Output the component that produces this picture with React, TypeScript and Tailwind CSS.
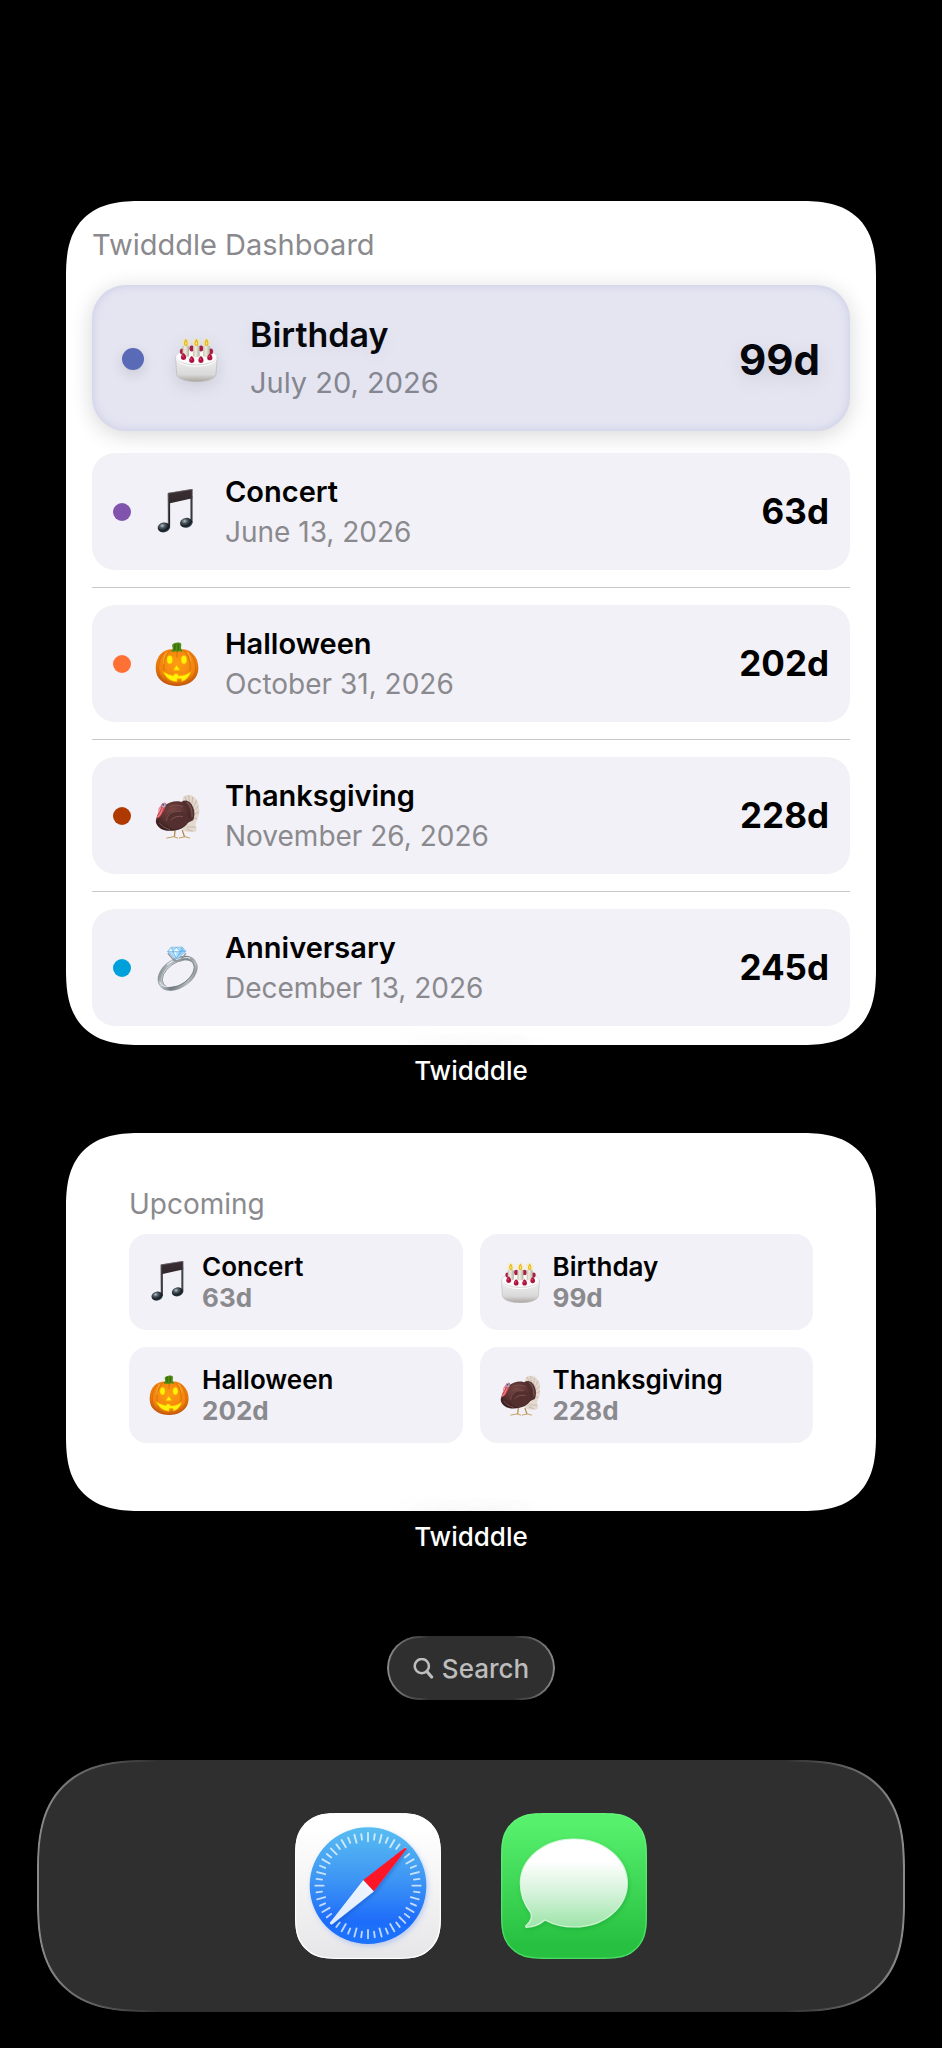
import React from "react";

type Kind = "cake" | "notes" | "pumpkin" | "turkey" | "ring";

interface EventItem {
  name: string;
  date: string;
  days: string;
  kind: Kind;
  dot: string;
}

const birthday: EventItem = { name: "Birthday", date: "July 20, 2026", days: "99d", kind: "cake", dot: "bg-[#596ab6]" };
const concert: EventItem = { name: "Concert", date: "June 13, 2026", days: "63d", kind: "notes", dot: "bg-[#8054ac]" };
const halloween: EventItem = { name: "Halloween", date: "October 31, 2026", days: "202d", kind: "pumpkin", dot: "bg-[#ff7034]" };
const thanksgiving: EventItem = { name: "Thanksgiving", date: "November 26, 2026", days: "228d", kind: "turkey", dot: "bg-[#ae3a00]" };
const anniversary: EventItem = { name: "Anniversary", date: "December 13, 2026", days: "245d", kind: "ring", dot: "bg-[#00a0da]" };

const rows = [concert, halloween, thanksgiving, anniversary];
const tiles = [concert, birthday, halloween, thanksgiving];

function Cake({ id }: { id: string }) {
  return (
    <>
      <defs>
        <linearGradient id={`${id}a`} x1="0" y1="0" x2="0" y2="1">
          <stop offset="0" stopColor="#f1f0f0" />
          <stop offset="0.7" stopColor="#dad9da" />
          <stop offset="1" stopColor="#aaa59e" />
        </linearGradient>
        <linearGradient id={`${id}b`} x1="0" y1="0" x2="1" y2="0">
          <stop offset="0" stopColor="#c4bfac" />
          <stop offset="0.4" stopColor="#f0ede0" />
          <stop offset="1" stopColor="#b3ae9c" />
        </linearGradient>
      </defs>
      <path d="M6 66 L9 116 C12 131 38 139 69 139 C100 139 126 131 129 116 L132 66Z" fill={`url(#${id}a)`} stroke="#b9b6b6" strokeWidth="2" />
      <ellipse cx="69" cy="64" rx="63" ry="24" fill="#fbfbfb" stroke="#cdcbcd" strokeWidth="2" />
      <path d="M8 70 C14 84 40 92 69 92 C98 92 124 84 130 70" fill="none" stroke="#fff" strokeWidth="3" />
      {[[26, 47], [55, 38], [83, 38], [113, 47]].map(([x, y]) => (
        <ellipse key={x} cx={x} cy={y} rx="7" ry="9" fill="#a81f45" />
      ))}
      {[37, 69, 100].map((x) => (
        <g key={x}>
          <circle cx={x} cy="20" r="13" fill="#ffe873" opacity="0.3" />
          <path d={`M${x - 10} 31 q10 -5 20 0 V62 q-10 6 -20 0Z`} fill={`url(#${id}b)`} />
          <path d={`M${x} 8 C${x + 8} 19 ${x + 7} 29 ${x} 30 C${x - 7} 29 ${x - 8} 19 ${x} 8Z`} fill="#e2b21a" />
          <path d={`M${x} 15 C${x + 4} 21 ${x + 3} 26 ${x} 27 C${x - 3} 26 ${x - 4} 21 ${x} 15Z`} fill="#fbe96a" />
        </g>
      ))}
      {[[30, 63], [55, 72], [83, 72], [110, 64]].map(([x, y]) => (
        <g key={x}>
          <path d={`M${x} ${y - 11} C${x + 8} ${y - 6} ${x + 10} ${y + 4} ${x + 6} ${y + 8} Q${x} ${y + 12} ${x - 6} ${y + 8} C${x - 10} ${y + 4} ${x - 8} ${y - 6} ${x} ${y - 11}Z`} fill="#b1123f" />
          <ellipse cx={x - 2} cy={y - 2} rx="2" ry="3" fill="#d9547a" />
        </g>
      ))}
    </>
  );
}

function Notes({ id }: { id: string }) {
  return (
    <>
      <defs>
        <radialGradient id={`${id}a`} cx="0.4" cy="0.3" r="0.75">
          <stop offset="0" stopColor="#b4c3cc" />
          <stop offset="0.3" stopColor="#4b5860" />
          <stop offset="0.7" stopColor="#141a1f" />
          <stop offset="1" stopColor="#43606c" />
        </radialGradient>
        <linearGradient id={`${id}b`} x1="0" y1="0" x2="0" y2="1">
          <stop offset="0" stopColor="#3a2e31" />
          <stop offset="1" stopColor="#221d22" />
        </linearGradient>
      </defs>
      <path d="M40 12 L115 0 V28 L47 43 V117 H41Z" fill={`url(#${id}b)`} />
      <path d="M109 22 H115 V104 H109Z" fill="#2c3035" />
      <path d="M41 14 V116 M114.500 2 V103" stroke="#76818a" strokeWidth="2" />
      <path d="M41 13 L114 1" stroke="#79747c" strokeWidth="2" />
      <ellipse cx="28" cy="117" rx="19" ry="15" fill={`url(#${id}a)`} transform="rotate(-10 28 117)" />
      <ellipse cx="96" cy="103" rx="19" ry="15" fill={`url(#${id}a)`} transform="rotate(-10 96 103)" />
    </>
  );
}

function Pumpkin({ id }: { id: string }) {
  return (
    <>
      <defs>
        <radialGradient id={`${id}a`} cx="0.5" cy="0.4" r="0.62">
          <stop offset="0" stopColor="#ff9d12" />
          <stop offset="0.7" stopColor="#f2830e" />
          <stop offset="1" stopColor="#b84a08" />
        </radialGradient>
      </defs>
      <path d="M67 29 C82 22 102 24 115 38 C131 52 136 76 131 97 C125 122 98 137 68 137 C38 137 10 122 5 97 C0 75 6 50 21 37 C34 25 54 22 67 29Z" fill={`url(#${id}a)`} />
      <path d="M49 28 C24 45 20 98 42 132 M87 28 C112 45 116 98 94 132 M28 36 C8 58 6 96 24 120 M108 36 C128 58 130 96 112 120 M68 32 V50" fill="none" stroke="#c9640a" strokeWidth="3" opacity="0.7" />
      <path d="M38 34 C28 46 26 58 28 70 M98 34 C108 44 110 52 110 62" fill="none" stroke="#ffb84a" strokeWidth="4" opacity="0.55" />
      <path d="M53 13 C56 4 77 2 81 9 L80 23 C84 27 86 31 82 33 C76 28 71 34 67 33 C62 31 58 34 50 32 C51 28 55 26 55 22Z" fill="#4f8a14" />
      <path d="M62 10 L61 28 M71 9 L72 28" stroke="#2f6109" strokeWidth="3" />
      <g fill="#fff208" stroke="#f7a800" strokeWidth="2">
        <ellipse cx="46" cy="57" rx="9" ry="13" />
        <ellipse cx="89" cy="57" rx="9" ry="13" />
        <path d="M67 73 L77 88 Q67 91 57 88Z" />
        <path d="M25 91 C37 101 50 104 58 105 L59 100 L71 100 L72 106 C86 106 99 102 110 93 C106 110 95 120 82 123 L81 115 L69 115 L68 124 C48 123 32 111 25 91Z" />
      </g>
    </>
  );
}

function Turkey({ id }: { id: string }) {
  return (
    <>
      <defs>
        <radialGradient id={`${id}a`} cx="0.5" cy="0.35" r="0.7">
          <stop offset="0" stopColor="#7c4a46" />
          <stop offset="0.55" stopColor="#573030" />
          <stop offset="1" stopColor="#311b1c" />
        </radialGradient>
      </defs>
      <path d="M62 113 L60 134 M84 113 L91 134" stroke="#b58a4d" strokeWidth="4" />
      <path d="M37 137 L58 133 L70 137 M75 137 L92 133 L106 137" fill="none" stroke="#c29a5c" strokeWidth="3" strokeLinecap="round" />
      <path d="M86 12 C92 8 97 5 104 6 C112 5 120 11 125 17 C133 25 134 35 135 45 C138 58 133 72 129 81 L124 96 L128 113 C122 122 112 116 106 119 C97 118 88 116 80 109Z" fill="#e3d9ce" />
      <path d="M92 10 L103 38 M103 7 L108 40 M116 12 L112 42 M127 23 L116 48 M133 39 L118 56 M134 58 L118 66 M129 78 L112 75 M97 103 L126 104 M96 109 L116 117" stroke="#b9a698" strokeWidth="2" />
      <path d="M82 27 C91 20 103 22 112 34 C121 48 124 65 117 83 L91 95Z" fill="#51302f" />
      <path d="M98 28 C109 37 115 51 114 72" fill="none" stroke="#7a5451" strokeWidth="4" />
      <path d="M5 78 C11 60 23 38 47 29 C70 20 94 26 103 47 C113 69 107 95 83 107 C61 118 28 119 13 104 C5 96 1 88 5 78Z" fill={`url(#${id}a)`} />
      <path d="M35 79 C39 60 58 49 79 55 C94 60 101 68 105 78 C98 99 81 109 59 111 C42 106 33 94 35 79Z" fill="#53302f" />
      <path d="M36 85 C38 65 55 52 80 56 M14 91 C23 101 31 108 47 111 M49 83 C58 72 73 69 86 72 M44 42 C58 36 73 35 86 43" fill="none" stroke="#805350" strokeWidth="3" />
      <path d="M34 31 C25 26 19 34 19 42 C19 51 8 64 6 75 C10 80 19 73 24 61 C29 53 35 43 34 31Z" fill="#c8424b" />
      <path d="M24 31 Q34 28 33 40 L27 46 Q20 43 21 36Z" fill="#a8b5d5" />
      <circle cx="26" cy="36" r="3" fill="#6a3f67" />
      <path d="M20 39 L14 47 L13 58 M24 48 L17 64 L10 72" fill="none" stroke="#ec8287" strokeWidth="4" strokeLinecap="round" />
    </>
  );
}

function Ring({ id }: { id: string }) {
  return (
    <>
      <defs>
        <linearGradient id={`${id}a`} x1="0" y1="0" x2="1" y2="1">
          <stop offset="0" stopColor="#5d656b" />
          <stop offset="0.25" stopColor="#bcc5ca" />
          <stop offset="0.5" stopColor="#727b81" />
          <stop offset="0.8" stopColor="#b4bcc1" />
          <stop offset="1" stopColor="#5c646a" />
        </linearGradient>
      </defs>
      <ellipse cx="70" cy="86" rx="61" ry="39" transform="rotate(-35 70 86)" fill="none" stroke={`url(#${id}a)`} strokeWidth="12" />
      <ellipse cx="72" cy="87" rx="55" ry="33" transform="rotate(-35 72 87)" fill="none" stroke="#6a7278" strokeWidth="2" />
      <path d="M15 112 C20 126 38 131 59 122 M38 60 C55 46 87 34 109 40" fill="none" stroke="#eef2f4" strokeWidth="3" />
      <path d="M40 25 L60 48 L79 48 L95 25 M57 41 L69 50 L82 41" fill="none" stroke="#8f999f" strokeWidth="4" />
      <path d="M39 20 L50 7 L84 6 L95 19 L70 42 L62 42Z" fill="#a9dcfb" stroke="#82b7de" strokeWidth="2" />
      <path d="M50 7 L57 21 L66 7 L78 21 L84 6 M39 20 H95 M57 21 L66 41 L78 21" fill="none" stroke="#5c9fda" strokeWidth="2" />
      <path d="M57 19 L66 8 L76 19Z M58 23 L66 37 L66 23Z M43 19 L50 10 L55 19Z" fill="#e7f8ff" />
      <path d="M80 19 L84 10 L91 19Z M70 35 L76 23 L85 23Z" fill="#72bdf4" />
    </>
  );
}

const art = { cake: Cake, notes: Notes, pumpkin: Pumpkin, turkey: Turkey, ring: Ring };

function Pictogram({ kind, small = false }: { kind: Kind; small?: boolean }) {
  const Art = art[kind];
  const id = React.useId();
  return (
    <svg viewBox="2 0 138 140" aria-hidden="true" className={small ? "block size-[42px] max-w-none" : "size-[46px] shrink-0"}>
      <Art id={id} />
    </svg>
  );
}

function FeaturedEvent({ item }: { item: EventItem }) {
  return (
    <article className="flex items-center gap-[30px] rounded-[34px] bg-[#e4e5f1] px-[30px] pt-[26px] pb-6 shadow-[0_4px_22px_rgba(0,0,0,0.16),inset_0_0_10px_#c6cae6]">
      <span className={`size-[22px] shrink-0 rounded-full shadow-[0_5px_14px_rgba(0,0,0,0.12)] ${item.dot}`} />
      <span className="drop-shadow-[0_5px_8px_rgba(0,0,0,0.1)]">
        <Pictogram kind={item.kind} />
      </span>
      <div className="min-w-0 flex-1 leading-[48px]">
        <h2 className="text-[34px] font-semibold text-[#07080c] [text-shadow:0_5px_18px_rgba(0,0,0,0.06)]">{item.name}</h2>
        <p className="text-[29px] text-[#85868f]">{item.date}</p>
      </div>
      <span className="text-[42px] font-bold text-[#05070d] [text-shadow:0_6px_20px_rgba(0,0,0,0.1)]">{item.days}</span>
    </article>
  );
}

function EventRow({ item }: { item: EventItem }) {
  return (
    <article className="flex min-h-[117px] items-center gap-6 rounded-[23px] bg-[#f2f1f7] px-[21px]">
      <span className={`size-[18px] shrink-0 rounded-full ${item.dot}`} />
      <Pictogram kind={item.kind} />
      <div className="min-w-0 flex-1 leading-[40px]">
        <h2 className="text-[29px] font-semibold text-black">{item.name}</h2>
        <p className="text-[28px] text-[#8a8a8e]">{item.date}</p>
      </div>
      <span className="text-[35px] font-bold text-black">{item.days}</span>
    </article>
  );
}

function EventTile({ item }: { item: EventItem }) {
  return (
    <article className="flex items-center gap-[13px] rounded-[18px] bg-[#f2f1f7] px-5 py-[17px]">
      <span className="w-10 shrink-0 overflow-hidden">
        <Pictogram kind={item.kind} small />
      </span>
      <div className="min-w-0 text-[26px] leading-[31px]">
        <h2 className="font-semibold text-black">{item.name}</h2>
        <p className="font-bold text-[#8a8a8e]">{item.days}</p>
      </div>
    </article>
  );
}

function AppLabel() {
  return (
    <p className="relative mt-[10px] text-center text-[26px] leading-[32px] font-medium text-white [text-shadow:0_0_30px_rgba(0,0,0,0.5)]">
      Twidddle
    </p>
  );
}

const squircle =
  "M0 159 C0 113 0 90 8 66 C18 39 39 18 66 8 C90 0 113 0 159 0 H279 C325 0 348 0 372 8 C399 18 420 39 430 66 C438 90 438 113 438 159 V279 C438 325 438 348 430 372 C420 399 399 420 372 430 C348 438 325 438 279 438 H159 C113 438 90 438 66 430 C39 420 18 399 8 372 C0 348 0 325 0 279Z";

function SafariIcon() {
  return (
    <svg viewBox="0 0 438 438" className="size-[146px]" aria-hidden="true">
      <defs>
        <linearGradient id="safariTile" x1="0" y1="0" x2="0" y2="1">
          <stop offset="0.1" stopColor="#ffffff" />
          <stop offset="1" stopColor="#e6e6e8" />
        </linearGradient>
        <linearGradient id="safariDial" x1="0" y1="0" x2="0" y2="1">
          <stop offset="0" stopColor="#59bdf1" />
          <stop offset="0.45" stopColor="#3d95f4" />
          <stop offset="0.8" stopColor="#1f6dfa" />
          <stop offset="1" stopColor="#1e73fb" />
        </linearGradient>
        <linearGradient id="safariSouth" x1="1" y1="0" x2="0" y2="1">
          <stop offset="0" stopColor="#f1f6ff" />
          <stop offset="1" stopColor="#dcebff" />
        </linearGradient>
        <filter id="safariGlow" x="-20%" y="-20%" width="140%" height="140%">
          <feDropShadow dx="5" dy="7" stdDeviation="8" floodColor="#3a78f0" floodOpacity="0.28" />
        </filter>
        <filter id="needleShade" x="-20%" y="-20%" width="140%" height="140%">
          <feDropShadow dx="5" dy="6" stdDeviation="5" floodColor="#0b3fa8" floodOpacity="0.3" />
        </filter>
        <clipPath id="safariClip">
          <path d={squircle} />
        </clipPath>
      </defs>
      <path d={squircle} fill="url(#safariTile)" />
      <path d={squircle} fill="none" stroke="#ffffff" strokeWidth="7" clipPath="url(#safariClip)" />
      <circle cx="219" cy="218" r="175" fill="url(#safariDial)" filter="url(#safariGlow)" />
      <g stroke="#ffffff" strokeOpacity="0.72" strokeWidth="5.5" strokeLinecap="round">
        {Array.from({ length: 48 }, (_, i) => (
          <line key={i} x1="219" x2="219" y1={i % 2 ? 62 : 60} y2={i % 2 ? 79 : 85} transform={`rotate(${i * 7.5} 219 218)`} />
        ))}
      </g>
      <g filter="url(#needleShade)">
        <path d="M205 201 L237 235 L112 334 Q104 337 106 328Z" fill="url(#safariSouth)" />
        <path d="M205 201 L237 235 L334 109 Q335 103 328 106Z" fill="#fd1526" />
      </g>
    </svg>
  );
}

function MessagesIcon() {
  const bubble =
    "M219 78 C308 78 379 137 379 210 C379 284 308 342 219 342 C186 342 156 334 132 321 C117 334 97 342 76 343 C73 342 73 339 75 338 C89 327 94 313 89 299 C69 274 58 244 58 210 C58 137 130 78 219 78Z";
  return (
    <svg viewBox="0 0 438 438" className="size-[146px]" aria-hidden="true">
      <defs>
        <linearGradient id="messagesTile" x1="0" y1="0" x2="0" y2="1">
          <stop offset="0.08" stopColor="#57f06d" />
          <stop offset="0.9" stopColor="#27c040" />
        </linearGradient>
        <linearGradient id="messagesBubble" x1="0" y1="0" x2="0" y2="1">
          <stop offset="0.25" stopColor="#ffffff" />
          <stop offset="0.62" stopColor="#d4f2d9" />
          <stop offset="1" stopColor="#9ce4a8" />
        </linearGradient>
        <filter id="messagesShade" x="-20%" y="-20%" width="140%" height="140%">
          <feDropShadow dx="3" dy="5" stdDeviation="7" floodColor="#0b8a28" floodOpacity="0.35" />
        </filter>
        <clipPath id="messagesClip">
          <path d={squircle} />
        </clipPath>
      </defs>
      <path d={squircle} fill="url(#messagesTile)" />
      <path d={squircle} fill="none" stroke="#6cf886" strokeOpacity="0.5" strokeWidth="8" clipPath="url(#messagesClip)" />
      <path d={bubble} fill="url(#messagesBubble)" stroke="#dcfbe1" strokeOpacity="0.85" strokeWidth="3.5" filter="url(#messagesShade)" />
    </svg>
  );
}

export default function App() {
  return (
    <main className="min-h-screen bg-black pt-[201px] pb-9 font-[Inter,sans-serif]">
      <div className="px-[66px]">
        <section
          aria-label="Twidddle Dashboard"
          className="rounded-[62px] bg-white px-[26px] pt-6 pb-[19px] supports-[corner-shape:squircle]:rounded-[76px] supports-[corner-shape:squircle]:[corner-shape:superellipse(1.4)]"
        >
          <h1 className="mb-5 text-[29px] leading-[40px] text-[#8a8a8e]">Twidddle Dashboard</h1>
          <FeaturedEvent item={birthday} />
          <ul className="mt-[22px]">
            {rows.map((item, i) => (
              <li key={item.name} className={i > 0 ? "mt-[17px] border-t border-[#c8c8ca] pt-[17px]" : ""}>
                <EventRow item={item} />
              </li>
            ))}
          </ul>
        </section>
        <AppLabel />

        <section
          aria-label="Upcoming"
          className="mt-[46px] rounded-[62px] bg-white px-[63px] pt-[53px] pb-[68px] supports-[corner-shape:squircle]:rounded-[76px] supports-[corner-shape:squircle]:[corner-shape:superellipse(1.4)]"
        >
          <h1 className="mb-3 text-[28px] leading-[36px] text-[#8a8a8e]">Upcoming</h1>
          <div className="grid grid-cols-2 gap-[17px]">
            {tiles.map((item) => (
              <EventTile key={item.name} item={item} />
            ))}
          </div>
        </section>
        <AppLabel />
      </div>

      <div className="mt-[83px] flex justify-center">
        <button
          type="button"
          className="relative flex h-16 items-center gap-2 rounded-full bg-[#2f2f2f] px-[26px] text-[26px] font-medium text-[#bdbdbd] after:absolute after:inset-0 after:rounded-full after:border-2 after:border-[#8c8c8c] after:[mask-image:linear-gradient(to_right,black,transparent_25%,transparent_75%,black)]"
        >
          <svg viewBox="0 0 60 62" className="size-[21px]" fill="none" stroke="currentColor" aria-hidden="true">
            <circle cx="25" cy="24" r="21" strokeWidth="7.5" />
            <path d="M40 40 L54 56" strokeWidth="9.5" strokeLinecap="round" />
          </svg>
          Search
        </button>
      </div>

      <nav
        aria-label="Dock"
        className="relative mx-[37px] mt-[60px] flex justify-center gap-[60px] rounded-[88px] bg-[#2f2f2f] py-[53px] after:pointer-events-none after:absolute after:inset-0 after:rounded-[88px] after:border-2 after:border-[#8c8c8c] after:[mask-image:linear-gradient(to_right,black,transparent_14%,transparent_86%,black)] supports-[corner-shape:squircle]:rounded-[110px] supports-[corner-shape:squircle]:[corner-shape:superellipse(1.4)] supports-[corner-shape:squircle]:after:rounded-[110px] supports-[corner-shape:squircle]:after:[corner-shape:superellipse(1.4)]"
      >
        <a href="#safari" aria-label="Safari">
          <SafariIcon />
        </a>
        <a href="#messages" aria-label="Messages">
          <MessagesIcon />
        </a>
      </nav>
    </main>
  );
}
